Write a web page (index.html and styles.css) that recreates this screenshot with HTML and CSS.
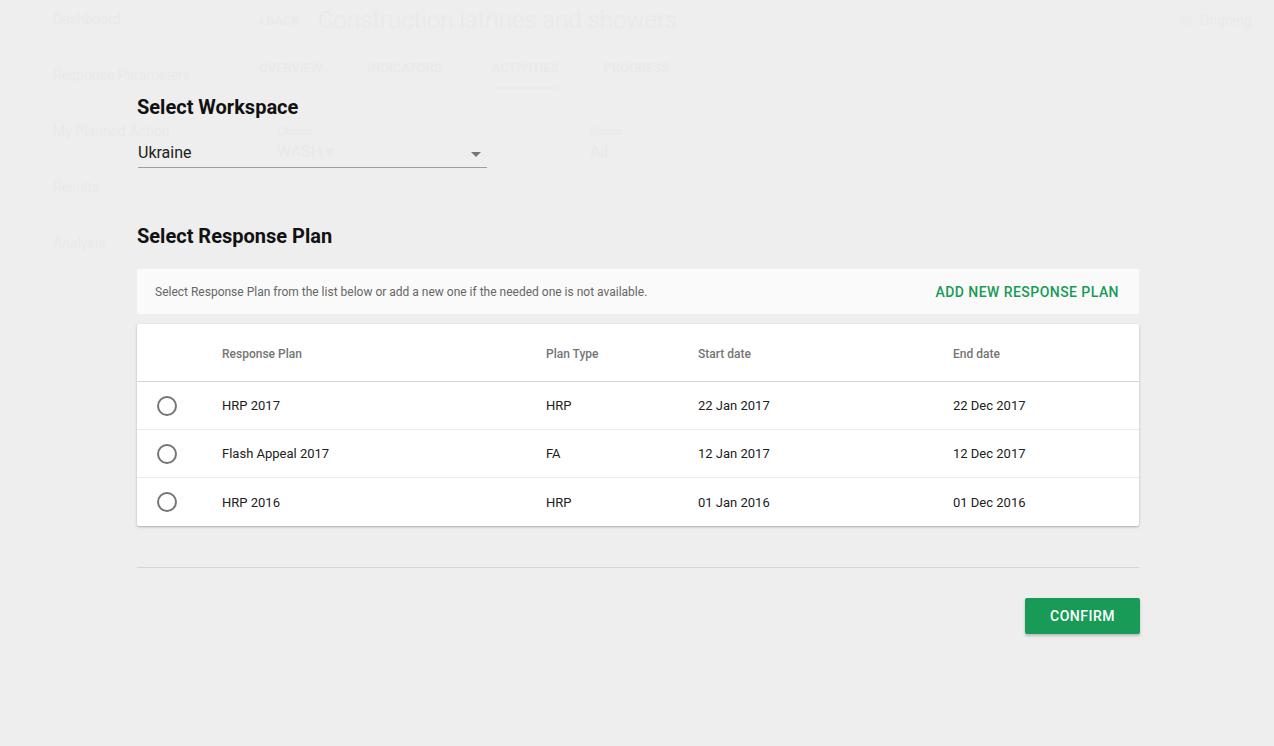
FILE: index.html
```html
<!DOCTYPE html>
<html lang="en">
<head>
<meta charset="utf-8">
<title>Select Response Plan</title>
<link rel="stylesheet" href="styles.css">
</head>
<body>
<div class="backdrop" aria-hidden="true">
  <nav class="bd-side">
    <span class="bd-link bd-first">Dashboard</span>
    <span class="bd-link">Response Parameters</span>
    <span class="bd-link">My Planned Action</span>
    <span class="bd-link">Results</span>
    <span class="bd-link">Analysis</span>
  </nav>
  <div class="bd-main">
    <div class="bd-head">
      <span class="bd-back">&lsaquo; BACK</span>
      <span class="bd-title">Construction latrines and showers</span>
      <span class="bd-status"><span class="bd-dot"></span>Ongoing</span>
    </div>
    <div class="bd-tabs">
      <span class="bd-tab">OVERVIEW</span>
      <span class="bd-tab">INDICATORS</span>
      <span class="bd-tab bd-active">ACTIVITIES</span>
      <span class="bd-tab">PROGRESS</span>
    </div>
    <div class="bd-fields">
      <div class="bd-field bd-f1"><span class="bd-lab">Cluster</span><span class="bd-val">WASH &#9662;</span></div>
      <div class="bd-field bd-f2"><span class="bd-lab">Status</span><span class="bd-val">All</span></div>
    </div>
  </div>
</div>

<main class="dialog">
  <h2 class="heading">Select Workspace</h2>
  <div class="select">
    <span class="select-value">Ukraine</span>
    <span class="select-arrow"></span>
  </div>

  <h2 class="heading heading-plan">Select Response Plan</h2>

  <div class="info-bar">
    <span class="info-text">Select Response Plan from the list below or add a new one if the needed one is not available.</span>
    <span class="add-link">ADD NEW RESPONSE PLAN</span>
  </div>

  <div class="table-card">
    <div class="trow thead">
      <span></span>
      <span>Response Plan</span>
      <span>Plan Type</span>
      <span>Start date</span>
      <span>End date</span>
    </div>
    <div class="trow">
      <span class="radio"></span>
      <span>HRP 2017</span>
      <span>HRP</span>
      <span>22 Jan 2017</span>
      <span>22 Dec 2017</span>
    </div>
    <div class="trow">
      <span class="radio"></span>
      <span>Flash Appeal 2017</span>
      <span>FA</span>
      <span>12 Jan 2017</span>
      <span>12 Dec 2017</span>
    </div>
    <div class="trow last">
      <span class="radio"></span>
      <span>HRP 2016</span>
      <span>HRP</span>
      <span>01 Jan 2016</span>
      <span>01 Dec 2016</span>
    </div>
  </div>

  <hr class="divider">

  <div class="actions">
    <button class="confirm">CONFIRM</button>
  </div>
</main>
</body>
</html>
```

FILE: styles.css
```css
* { box-sizing: border-box; }

html, body {
  margin: 0;
  padding: 0;
  background: #eeeeee;
  font-family: Roboto, "Liberation Sans", Arial, sans-serif;
  color: #212121;
}

body {
  position: relative;
  width: 1274px;
  min-height: 746px;
  overflow: hidden;
}

/* ghost page behind the overlay */
.backdrop {
  position: absolute;
  inset: 0;
  display: grid;
  grid-template-columns: 206px 1fr;
  padding-left: 53px;
  color: #e9e9e9;
  z-index: 0;
}

.bd-side {
  display: flex;
  flex-direction: column;
  font-size: 14px;
  line-height: 20px;
}
.bd-link { margin-top: 36px; }
.bd-link.bd-first { margin-top: 9px; }

.bd-main {
  display: flex;
  flex-direction: column;
}
.bd-head {
  display: flex;
  align-items: center;
  height: 40px;
  padding-right: 22px;
}
.bd-back { font-size: 13px; font-weight: 500; width: 59px; }
.bd-title { font-size: 24px; font-weight: 300; flex: 1; }
.bd-status { font-size: 14px; display: flex; align-items: center; gap: 8px; }
.bd-dot { width: 12px; height: 12px; border-radius: 50%; background: #ebecef; }

.bd-tabs {
  display: flex;
  margin-top: 16px;
  font-size: 13px;
  font-weight: 500;
}
.bd-tab { padding: 4px 0 14px; margin-right: 45px; }
.bd-tab:nth-child(2) { margin-right: 50px; }
.bd-active { border-bottom: 2px solid #ebebeb; padding: 4px 0 12px; }

.bd-fields {
  display: flex;
  margin-top: 36px;
  padding-left: 18px;
}
.bd-field { display: flex; flex-direction: column; font-size: 11px; }
.bd-f1 { width: 313px; }
.bd-lab { line-height: 14px; }
.bd-val { font-size: 16px; line-height: 26px; }

/* dialog content */
.dialog {
  position: relative;
  z-index: 1;
  width: 1139px;
  padding: 95px 0 0 137px;
}

.heading {
  margin: 0;
  font-size: 20px;
  line-height: 24px;
  font-weight: 700;
  color: #111;
}

.select {
  width: 349px;
  margin: 24px 0 0 1px;
  display: flex;
  align-items: center;
  justify-content: space-between;
  border-bottom: 1px solid #9e9e9e;
  padding: 0 6px 4px 0;
  height: 25px;
}
.select-value {
  font-size: 16px;
  line-height: 20px;
  color: #212121;
}
.select-arrow {
  width: 0;
  height: 0;
  border-left: 5px solid transparent;
  border-right: 5px solid transparent;
  border-top: 5px solid #757575;
  margin-top: 3px;
}

.heading-plan { margin-top: 56px; }

.info-bar {
  margin-top: 21px;
  height: 45px;
  background: #fafafa;
  display: flex;
  align-items: center;
  justify-content: space-between;
  padding: 0 20px 0 18px;
}
.info-text {
  font-size: 12px;
  color: #666666;
}
.add-link {
  font-size: 14px;
  font-weight: 500;
  letter-spacing: 0.45px;
  color: #179b57;
}

.table-card {
  margin-top: 10px;
  background: #fff;
  border-radius: 2px;
  box-shadow: 0 1px 3px rgba(0,0,0,0.22), 0 1px 1px rgba(0,0,0,0.08);
}

.trow {
  display: grid;
  grid-template-columns: 85px 324px 152px 255px 1fr;
  align-items: center;
  height: 48px;
  font-size: 13px;
  color: #212121;
  border-bottom: 1px solid #eaeaea;
}
.trow.last { border-bottom: none; }
.trow.thead {
  height: 58px;
  padding-top: 2px;
  font-size: 12px;
  font-weight: 500;
  color: #757575;
  border-bottom: 1px solid #d4d4d4;
}

.radio {
  width: 20px;
  height: 20px;
  margin-left: 20px;
  border: 2px solid #757575;
  border-radius: 50%;
}

.divider {
  margin: 41px 0 0;
  border: 0;
  border-top: 1px solid #d6d6d6;
  height: 0;
}

.actions {
  display: flex;
  justify-content: flex-end;
  margin-top: 30px;
  margin-right: -1px;
}
.confirm {
  width: 115px;
  height: 36px;
  border: 0;
  border-radius: 2px;
  background: #179b57;
  color: #fff;
  font-family: Roboto, "Liberation Sans", Arial, sans-serif;
  font-size: 14px;
  font-weight: 500;
  letter-spacing: 0.5px;
  box-shadow: 0 2px 3px rgba(0,0,0,0.22);
  cursor: pointer;
}
```
